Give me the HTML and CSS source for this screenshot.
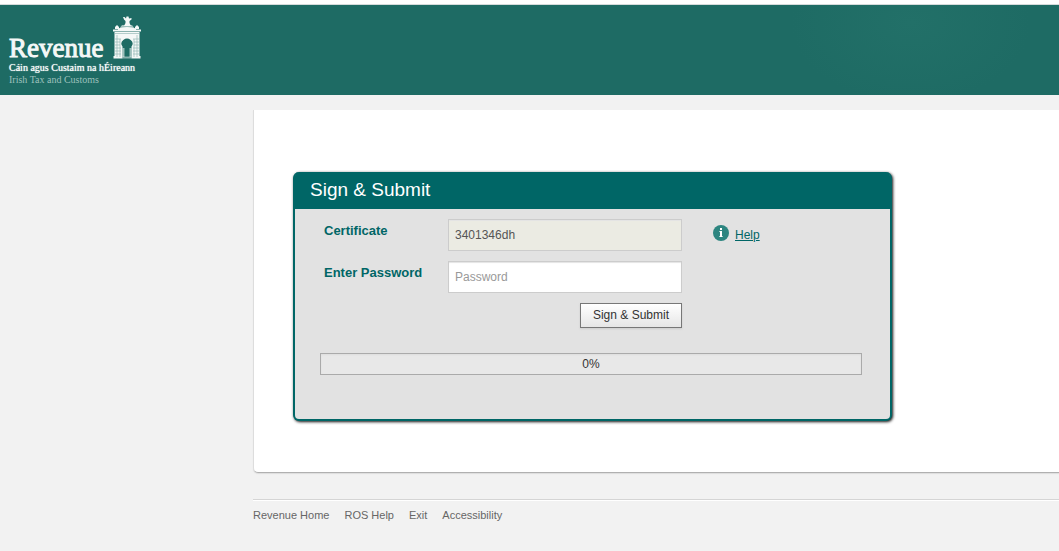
FILE: index.html
```html
<!DOCTYPE html>
<html lang="en">
<head>
<meta charset="utf-8">
<meta name="viewport" content="width=device-width, initial-scale=1">
<title>Sign &amp; Submit</title>
<link rel="stylesheet" href="styles.css">
</head>
<body>
<header class="banner">
  <div class="brand">
    <div class="brand-top">
      <span class="brand-name">Revenue</span>
      <svg class="brand-arch" viewBox="0 0 28 44" aria-hidden="true">
        <g fill="#f4f8f7">
          <path d="M10 2l1.500 0 1.500 1.500 .5-2h2l.5 2 2.500-.5 0 1.500-2 1.500 0 2 1.500 3h-7l1.500-3 0-2-1.500-1.500z"/>
          <path d="M9 10h10l3 4H6z" opacity=".6"/>
          <path d="M2 14v-2l2-2 2 2v2zM22 14v-2l2-2 2 2v2z"/>
          <path d="M5 13.500Q14 10.500 23 13.500v1.500H5z"/>
          <path d="M0 14.500h28v2H0z"/>
          <path fill-rule="evenodd" d="M1.500 17h25v24h1v2.500H18.500V31.500a5.500 5 0 1 0-9 0V43.500H.5V41h1z"/>
          <path d="M9.500 41.500h9v2h-9z" opacity=".5"/>
          <path d="M9.500 33h2v9h-2zM16.500 33h2v9h-2z" opacity=".6"/>
        </g>
        <g fill="none" stroke="#1e6b64" stroke-width=".6" opacity=".5">
          <path d="M2 18.500h24M2 24h6M20 24h6M2 27h5M21 27h5M2 30h5M21 30h5M2 33h6M20 33h6M2 36h6M20 36h6M2 39h6M20 39h6"/>
          <path d="M4 20v22M7 24v18M21 24v18M24 20v22"/>
        </g>
      </svg>
    </div>
    <div class="brand-irish" lang="ga">Cáin agus Custaim na hÉireann</div>
    <div class="brand-english">Irish Tax and Customs</div>
  </div>
</header>
<main class="content">
  <section class="sheet">
    <form class="card">
      <h1 class="card-title">Sign &amp; Submit</h1>
      <div class="card-body">
        <div class="fields">
          <label class="label" for="certificate">Certificate</label>
          <input class="field field-readonly" id="certificate" type="text" value="3401346dh" readonly>
          <div class="help">
            <svg class="help-icon" viewBox="0 0 16 16" aria-hidden="true">
              <circle cx="8" cy="8" r="8" fill="#2d8580"/>
              <path d="M7 3h2v2H7zM7 6h2v6H7z" fill="#fff"/>
              <path d="M6 6h1v1H6zM6 11h1v1H6zM9 11h1v1H9z" fill="#fff" opacity=".6"/>
            </svg>
            <a class="help-link" href="#">Help</a>
          </div>
          <label class="label" for="password">Enter Password</label>
          <input class="field" id="password" type="password" placeholder="Password">
          <button class="submit" type="submit">Sign &amp; Submit</button>
        </div>
        <div class="progress" role="progressbar" aria-label="Progress" aria-valuemin="0" aria-valuemax="100" aria-valuenow="0">0%</div>
      </div>
    </form>
  </section>
  <footer class="footer">
    <a class="footer-link" href="#">Revenue Home</a>
    <a class="footer-link" href="#">ROS Help</a>
    <a class="footer-link" href="#">Exit</a>
    <a class="footer-link" href="#">Accessibility</a>
  </footer>
</main>
</body>
</html>
```
FILE: styles.css
```css
* { box-sizing: border-box; }
body {
  margin: 0;
  background: #f2f2f2;
  color: #333;
  font: 12px/16px "Liberation Sans", Arial, sans-serif;
}
.banner {
  border-top: 4px solid #fff;
  box-shadow: inset 0 1px #d5dbdb;
  padding-top: 1px;
}
.brand {
  min-height: 90px;
  padding: 11px 9px 8px;
  background: radial-gradient(ellipse 120px 80px at 86% 20%, #227068, #1e6b64);
  font-family: "Liberation Serif", "Times New Roman", serif;
  white-space: nowrap;
}
.brand-top {
  display: flex;
  align-items: flex-end;
  gap: 9px;
  height: 43px;
}
.brand-name {
  width: 95px;
  color: #f4f8f7;
  font-size: 27px;
  line-height: 22px;
  -webkit-text-stroke: 1px #f4f8f7;
}
.brand-arch { width: 28px; height: 44px; }
.brand-irish {
  margin-top: 3px;
  color: #fff;
  font-size: 10px;
  line-height: 12px;
  text-shadow: 0 0 1px #f4f8f7;
}
.brand-english {
  color: #9dc0bc;
  font-size: 10px;
  line-height: 12px;
}
.content { padding: 15px 0 24px 253px; }
.sheet {
  padding: 62px 0 51px 39px;
  background: #fff;
  border-left: 1px solid #ddd;
  border-bottom: 1px solid #b0b0b0;
  border-bottom-left-radius: 5px;
  box-shadow: 0 1px 1px #ddd;
}
.card {
  max-width: 599px;
  border: 2px solid #006666;
  border-top: 0;
  border-radius: 6px;
  background: #e2e2e2;
  box-shadow: 1px 1px 3px #111;
}
.card-title {
  margin: 0;
  padding: 6px 15px 7px;
  border-radius: 4px 4px 0 0;
  background: #006666;
  color: #fff;
  font-size: 19px;
  line-height: 24px;
  font-weight: 400;
}
.card-body { padding: 10px 28px 44px 25px; }
.fields {
  display: grid;
  grid-template-columns: 120px 234px 1fr;
  gap: 10px 4px;
  padding-left: 4px;
}
.label {
  padding-top: 4px;
  color: #006666;
  font-size: 13px;
  font-weight: 700;
}
.field {
  width: 100%;
  height: 32px;
  padding: 0 6px;
  border: 1px solid #ccc;
  border-radius: 0;
  background: #fff;
  box-shadow: inset 0 1px 1px #e4e4e4;
  color: #555;
  font: inherit;
}
.field-readonly { background: #ebebe3; }
.field::placeholder { color: #999; opacity: 1; }
.help {
  display: flex;
  align-items: flex-start;
  gap: 6px;
  padding: 6px 0 0 27px;
}
.help-icon { width: 16px; height: 16px; }
.help-link { padding-top: 2px; color: #006666; }
.submit {
  grid-column: 2;
  justify-self: end;
  height: 25px;
  padding: 0 12px 2px;
  border: 1px solid #777;
  border-radius: 0;
  background: linear-gradient(#fff, #e6e6e6);
  box-shadow: 0 1px 2px #ccc;
  color: #333;
  font: inherit;
}
.progress {
  margin-top: 25px;
  border: 1px solid #aaa;
  background: #e8e8e8;
  box-shadow: inset 0 1px 2px #ddd;
  line-height: 20px;
  text-align: center;
}
.footer {
  display: flex;
  gap: 15px;
  margin-top: 26px;
  padding-top: 7px;
  border-top: 1px solid #d5d5d5;
  box-shadow: inset 0 1px #fff;
  font-size: 11px;
}
.footer-link { color: #666; text-decoration: none; }
```
